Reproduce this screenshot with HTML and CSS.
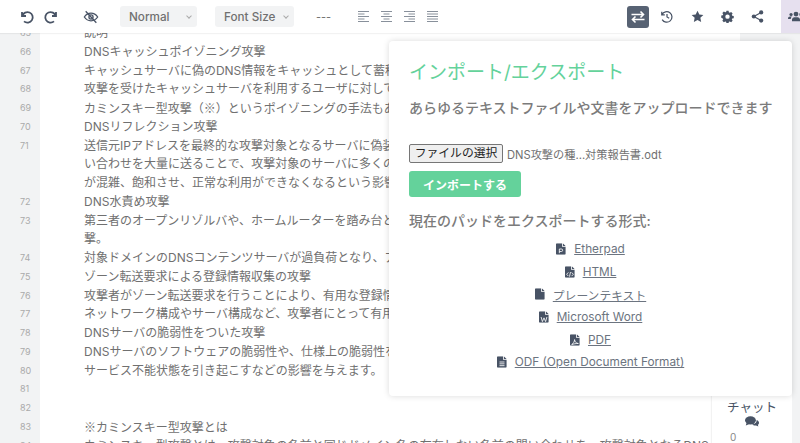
FILE: index.html
```html
<!DOCTYPE html>
<html lang="ja">
<head>
  <meta charset="UTF-8">
  <title>Etherpad</title>
  <link rel="stylesheet" href="styles.css">
</head>
<body>
  <svg class="defs" width="0" height="0">
    <symbol id="file" viewBox="0 0 12 14"><path d="M1 0h6.200v3.600c0 .4.3.7.7.7H11.500V13c0 .6-.4 1-1 1H1c-.6 0-1-.4-1-1V1c0-.6.4-1 1-1zM8.200 0l3.300 3.300H8.200z"/></symbol>
  </svg>

  <div class="toolbar">
    <div class="tools">
      <button class="icon undo"><svg viewBox="0 0 16 16"><path d="M3 3v4h4M3.300 7A5.300 5.300 0 1 1 5 12.400"/></svg></button>
      <button class="icon redo"><svg viewBox="0 0 16 16"><path d="M13 3v4H9M12.700 7A5.300 5.300 0 1 0 11 12.400"/></svg></button>
      <button class="icon eye"><svg viewBox="0 0 18 16"><path d="M1.500 8C3.500 5 6 3.700 9 3.700S14.500 5 16.500 8c-2 3-4.500 4.300-7.500 4.300S3.500 11 1.500 8z"/><circle cx="9" cy="8" r="2.300"/><path d="M3 1.500l12 13"/></svg></button>
      <div class="select normal">Normal <span class="caret"></span></div>
      <div class="select size">Font Size <span class="caret"></span></div>
      <span class="dashes">---</span>
      <div class="aligns">
        <svg viewBox="0 0 11 11"><path d="M0 .5h11M0 3h6.500M0 5.500h11M0 8h6.500M0 10.500h11"/></svg>
        <svg viewBox="0 0 11 11"><path d="M0 .5h11M2.500 3h6M0 5.500h11M2.500 8h6M0 10.500h11"/></svg>
        <svg viewBox="0 0 11 11"><path d="M0 .5h11M4.500 3h6.500M0 5.500h11M4.500 8h6.500M0 10.500h11"/></svg>
        <svg viewBox="0 0 11 11"><path d="M0 .5h11M0 3h11M0 5.500h11M0 8h11M0 10.500h11"/></svg>
      </div>
    </div>
    <div class="tools right">
      <button class="icon active"><svg viewBox="0 0 16 16"><path d="M1.500 5.500h12M10.500 2.500l3 3-3 3M14.500 10.500h-12M5.500 7.500l-3 3 3 3"/></svg></button>
      <button class="icon history"><svg viewBox="0 0 16 16"><path d="M2 2v3.500h3.500M2.300 5.300A6 6 0 1 1 2.500 11M8 4.500V8l2.500 1.500"/></svg></button>
      <button class="icon fill"><svg viewBox="0 0 16 16"><path d="M8 .8l2.200 4.700 5 .6-3.700 3.500 1 5.100L8 12.200l-4.500 2.500 1-5.100L.8 6.100l5-.6z"/></svg></button>
      <button class="icon fill"><svg viewBox="0 0 16 16"><path fill-rule="evenodd" d="M6.700 1h2.600l.4 1.900 1.100.5 1.700-1 1.800 1.800-1 1.700.5 1.100 1.900.4v2.600l-1.900.4-.5 1.100 1 1.700-1.800 1.800-1.700-1-1.100.5-.4 1.900H6.700l-.4-1.900-1.100-.5-1.700 1-1.800-1.800 1-1.700-.5-1.100L.3 9.500V6.900l1.900-.4.5-1.100-1-1.700 1.800-1.800 1.700 1 1.100-.5zM8 5.500a2.700 2.700 0 1 0 0 5.400 2.700 2.700 0 0 0 0-5.400z"/></svg></button>
      <button class="icon fill"><svg viewBox="0 0 16 16"><circle cx="12.500" cy="3" r="2.600"/><circle cx="12.500" cy="13" r="2.600"/><circle cx="3.500" cy="8" r="2.600"/><path class="link" d="M12.500 3l-9 5 9 5"/></svg></button>
      <button class="icon users fill"><svg viewBox="0 0 20 16"><circle cx="10" cy="5" r="3"/><circle cx="3.800" cy="5.500" r="2"/><circle cx="16.200" cy="5.500" r="2"/><path d="M5 14v-2c0-2 1.500-3.200 3-3.200h4c1.500 0 3 1.200 3 3.200v2zM0 11c0-2 1-3 2.500-3H5c-1 .7-1.500 1.800-1.500 3zM20 11c0-2-1-3-2.500-3H15c1 .7 1.500 1.800 1.500 3z"/></svg></button>
    </div>
  </div>

  <div class="main">
    <div class="editor">
      <div class="doc">
        <div class="row"><span class="num">65</span><span class="txt">説明</span></div>
        <div class="row"><span class="num">66</span><span class="txt">DNSキャッシュポイゾニング攻撃</span></div>
        <div class="row"><span class="num">67</span><span class="txt">キャッシュサーバに偽のDNS情報をキャッシュとして蓄積させ</span></div>
        <div class="row"><span class="num">68</span><span class="txt">攻撃を受けたキャッシュサーバを利用するユーザに対して、</span></div>
        <div class="row"><span class="num">69</span><span class="txt">カミンスキー型攻撃（<span class="cjk">※</span>）というポイゾニングの手法もあり</span></div>
        <div class="row"><span class="num">70</span><span class="txt">DNSリフレクション攻撃</span></div>
        <div class="row"><span class="num">71</span><span class="txt">送信元IPアドレスを最終的な攻撃対象となるサーバに偽装し</span></div>
        <div class="row"><span class="num"></span><span class="txt">い合わせを大量に送ることで、攻撃対象のサーバに多くのDNS</span></div>
        <div class="row"><span class="num"></span><span class="txt">が混雑、飽和させ、正常な利用ができなくなるという影響を</span></div>
        <div class="row"><span class="num">72</span><span class="txt">DNS水責め攻撃</span></div>
        <div class="row"><span class="num">73</span><span class="txt">第三者のオープンリゾルバや、ホームルーターを踏み台とし</span></div>
        <div class="row"><span class="num"></span><span class="txt">撃。</span></div>
        <div class="row"><span class="num">74</span><span class="txt">対象ドメインのDNSコンテンツサーバが過負荷となり、アクセス</span></div>
        <div class="row"><span class="num">75</span><span class="txt">ゾーン転送要求による登録情報収集の攻撃</span></div>
        <div class="row"><span class="num">76</span><span class="txt">攻撃者がゾーン転送要求を行うことにより、有用な登録情報を</span></div>
        <div class="row"><span class="num">77</span><span class="txt">ネットワーク構成やサーバ構成など、攻撃者にとって有用な</span></div>
        <div class="row"><span class="num">78</span><span class="txt">DNSサーバの脆弱性をついた攻撃</span></div>
        <div class="row"><span class="num">79</span><span class="txt">DNSサーバのソフトウェアの脆弱性や、仕様上の脆弱性を突い</span></div>
        <div class="row"><span class="num">80</span><span class="txt">サービス不能状態を引き起こすなどの影響を与えます。</span></div>
        <div class="row"><span class="num">81</span><span class="txt"></span></div>
        <div class="row"><span class="num">82</span><span class="txt"></span></div>
        <div class="row"><span class="num">83</span><span class="txt"><span class="cjk">※</span>カミンスキー型攻撃とは</span></div>
        <div class="row"><span class="num">84</span><span class="txt">カミンスキー型攻撃とは、攻撃対象の名前と同じドメイン名の存在しない名前の問い合わせを、攻撃対象となるDNS</span></div>
      </div>
    </div>
  </div>

  <div class="chat">
    <div class="chat-title">チャット</div>
    <svg class="chat-icon" viewBox="0 0 18 14"><ellipse cx="7" cy="5.500" rx="7" ry="5.300"/><path d="M2 9l-1 3 4-1.500zM15 5c2 .8 3 2 3 3.500 0 1.200-.6 2.200-1.500 2.800l.7 2.200-3-1.500c-2 .3-4-.3-5-1.500 3.500 0 6-2.500 5.800-5.500z"/></svg>
    <div class="chat-count">0</div>
  </div>

  <div class="popup">
    <h1>インポート/エクスポート</h1>
    <h2 class="lead">あらゆるテキストファイルや文書をアップロードできます</h2>
    <div class="picker">
      <button class="choose">ファイルの選択</button>
      <span class="filename">DNS攻撃の種...対策報告書.odt</span>
    </div>
    <button class="submit">インポートする</button>
    <h2 class="export-title">現在のパッドをエクスポートする形式:</h2>
    <ul class="exports">
      <li><svg class="fileicon" viewBox="0 0 12 14"><use href="#file"/><path class="mark" d="M4 12V7h2.500a1.500 1.500 0 0 1 0 3H4"/></svg><a href="#">Etherpad</a></li>
      <li><svg class="fileicon" viewBox="0 0 12 14"><use href="#file"/><path class="mark" d="M4 7.500L2 9.700l2 2.200M8 7.500l2 2.200-2 2.200M6.600 7l-1.200 5.500"/></svg><a href="#">HTML</a></li>
      <li><svg class="fileicon" viewBox="0 0 12 14"><use href="#file"/></svg><a href="#">プレーンテキスト</a></li>
      <li><svg class="fileicon" viewBox="0 0 12 14"><use href="#file"/><path class="mark" d="M2.500 7l1.600 5.500L6 8l1.900 4.500L9.500 7"/></svg><a href="#">Microsoft Word</a></li>
      <li><svg class="fileicon" viewBox="0 0 12 14"><use href="#file"/><path class="mark" d="M2 12.500c2-1 3.500-4 3.500-6 0 2.500 2 4.500 4.500 4.700-2.500-.2-6 .6-8 1.300z"/></svg><a href="#">PDF</a></li>
      <li><svg class="fileicon" viewBox="0 0 12 14"><use href="#file"/><path class="mark" d="M3 7h6M3 9.200h6M3 11.400h6"/></svg><a href="#">ODF (Open Document Format)</a></li>
    </ul>
  </div>
</body>
</html>
```

FILE: styles.css
```css
html, body {
  height: 100%;
}
body {
  margin: 0;
  overflow: hidden;
  background: #f2f3f4;
  color: #707070;
  font-family: "Inter", "Noto Sans CJK JP", sans-serif;
  font-size: 12px;
}
.defs {
  position: absolute;
}
button {
  font-family: inherit;
}
.cjk {
  font-family: "Noto Sans CJK JP", sans-serif;
}

/* toolbar */
.toolbar {
  position: relative;
  z-index: 2;
  display: flex;
  justify-content: space-between;
  height: 33px;
  background: #fff;
  box-shadow: 0 1px 1px rgba(0, 0, 0, 0.05);
}
.tools {
  display: flex;
  align-items: center;
  padding-left: 19px;
}
.tools.right {
  padding-left: 0;
}
.icon {
  width: 16px;
  height: 16px;
  padding: 0;
  border: none;
  background: none;
  display: flex;
  align-items: center;
  justify-content: center;
}
.icon svg {
  width: 16px;
  height: 16px;
  fill: none;
  stroke: #485365;
  stroke-width: 1.800;
}
.icon.fill svg {
  width: 13px;
  height: 13px;
  fill: #485365;
  stroke: none;
}
.icon .link {
  fill: none;
  stroke: #485365;
  stroke-width: 1.500;
}
.undo {
  margin-right: 8px;
}
.redo {
  margin-right: 24px;
}
.eye {
  margin-right: 21px;
}
.eye svg {
  stroke-width: 1.500;
}
.select {
  display: flex;
  align-items: center;
  justify-content: space-between;
  box-sizing: border-box;
  height: 21px;
  padding: 0 6px 0 9px;
  border-radius: 3px;
  background: #f2f3f4;
  color: #707070;
  font-size: 11.700px;
  font-weight: 500;
}
.normal {
  width: 77px;
  margin-right: 18px;
}
.size {
  width: 79px;
}
.caret {
  width: 3px;
  height: 3px;
  margin-top: -2px;
  border-right: 1px solid #aaa;
  border-bottom: 1px solid #aaa;
  transform: rotate(45deg);
}
.dashes {
  margin-left: 22px;
  font-size: 11px;
}
.aligns {
  display: flex;
  gap: 12px;
  margin-left: 27px;
}
.aligns svg {
  width: 11px;
  height: 11px;
  stroke: #6a7381;
  stroke-width: 0.800;
  fill: none;
}
.active {
  width: 22px;
  height: 22px;
  margin-right: 10px;
  border-radius: 3px;
  background: #576273;
}
.active svg {
  stroke: #fff;
  stroke-width: 1.600;
}
.history {
  margin-right: 14px;
}
.history svg {
  width: 14px;
  height: 14px;
  stroke-width: 1.400;
}
.right .fill {
  margin-right: 14px;
}
.right .users {
  width: 19px;
  height: 33px;
  margin: 0 0 0 2px;
  padding-left: 7px;
  box-sizing: border-box;
  justify-content: flex-start;
  overflow: hidden;
  background: #e6e0ef;
}
.icon.users svg {
  flex: none;
  width: 16px;
}

/* pad text */
.main {
  height: calc(100% - 33px);
  overflow: hidden;
}
.editor {
  width: 740px;
  height: 100%;
  overflow: hidden;
  background: #fff;
}
.doc {
  margin-top: -9px;
}
.row {
  display: flex;
  height: 18.750px;
  line-height: 18.750px;
  white-space: nowrap;
}
.num {
  flex: none;
  box-sizing: border-box;
  width: 40px;
  padding-left: 20px;
  background: #f2f3f4;
  color: #aaa;
  font-size: 9px;
}
.txt {
  padding-left: 44px;
  color: #707070;
  font-size: 12px;
}

/* chat box */
.chat {
  position: absolute;
  left: 712px;
  top: 390px;
  width: 80px;
  height: 53px;
  background: #fff;
  box-shadow: -1px 0 1px rgba(0, 0, 0, 0.05);
  text-align: center;
}
.chat-title {
  margin-top: 10px;
  color: #485365;
  font-size: 12.500px;
  line-height: 16px;
}
.chat-icon {
  display: block;
  width: 14px;
  height: 11px;
  margin: 0 auto;
  fill: #485365;
}
.chat-count {
  margin: 4px 0 0 18px;
  color: #888;
  font-size: 10px;
  line-height: 12px;
  text-align: left;
}

/* import / export popup */
.popup {
  position: absolute;
  z-index: 1;
  left: 389px;
  top: 41px;
  box-sizing: border-box;
  width: 403px;
  height: 355px;
  padding: 20px;
  border-radius: 4px;
  background: #fff;
  box-shadow: 0 0 6px rgba(0, 0, 0, 0.15);
}
h1 {
  margin: 0;
  color: #64d29b;
  font-size: 19px;
  font-weight: 400;
  line-height: 24px;
}
h2 {
  margin: 0;
  color: #7b7b7b;
  font-size: 14px;
  font-weight: 500;
  line-height: 20px;
  white-space: nowrap;
}
.lead {
  margin-top: 13px;
}
.picker {
  display: flex;
  align-items: center;
  margin-top: 26px;
}
.choose {
  box-sizing: border-box;
  width: 94px;
  height: 19px;
  padding: 0;
  border: 1px solid #767676;
  border-radius: 2px;
  background: #efefef;
  color: #222;
  font-size: 11.800px;
  line-height: 17px;
}
.filename {
  margin-left: 4px;
  font-size: 11.200px;
}
.submit {
  display: block;
  width: 112px;
  height: 26px;
  margin-top: 8px;
  border: none;
  border-radius: 3px;
  background: #64d29b;
  color: #fff;
  font-size: 12px;
  font-weight: 700;
}
.export-title {
  margin-top: 14px;
}
.exports {
  margin: 7px 0 0;
  padding: 0;
  list-style: none;
}
.exports li {
  display: flex;
  justify-content: center;
  align-items: center;
  gap: 8px;
  height: 22.600px;
}
.exports a {
  color: #6c7480;
  font-size: 11.800px;
}
.fileicon {
  width: 10px;
  height: 12px;
  fill: #485365;
}
.mark {
  fill: none;
  stroke: #fff;
  stroke-width: 1;
}
```
